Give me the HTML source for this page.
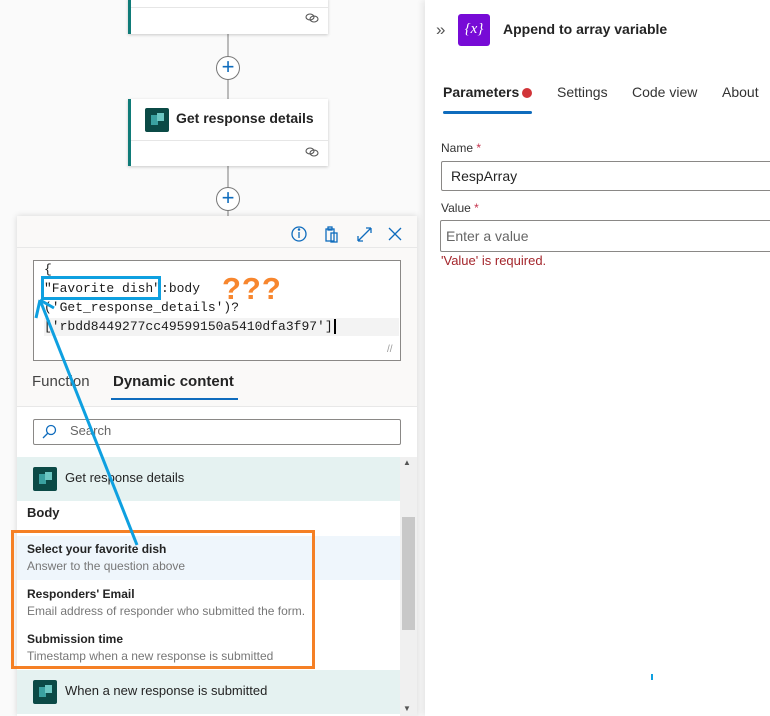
<!DOCTYPE html>
<html><head><meta charset="utf-8"><style>
*{margin:0;padding:0;box-sizing:border-box}
body{width:770px;height:716px;overflow:hidden;background:#fafafa;font-family:"Segoe UI","Liberation Sans",sans-serif;color:#242424;position:relative}
.a{position:absolute}
.card{position:absolute;background:#fff;border-left:3px solid #0f7b78;box-shadow:0 1px 3px rgba(0,0,0,.2)}
.mono{font-family:"Liberation Mono",monospace;font-size:13px;color:#1b1b1b}
.ficon{position:absolute;background:#0b4a46;border-radius:2px}
.ficon:before{content:"";position:absolute;left:25%;top:30%;width:30%;height:40%;background:#3aa1a0}
.ficon:after{content:"";position:absolute;left:48%;top:22%;width:32%;height:32%;background:#6cc7c2}
.t{position:absolute;white-space:nowrap}
</style></head><body>
<div class="a" style="left:227px;top:30px;width:2px;height:190px;background:#bbb"></div>
<div class="card" style="left:128px;top:-2px;width:200px;height:36px">
 <div class="a" style="left:0;top:9px;width:197px;height:1px;background:#e6e6e6"></div>
 <svg class="a" style="left:174px;top:15px" width="14" height="10" fill="none" stroke="#555" stroke-width="1.1"><ellipse cx="5" cy="4" rx="4" ry="3"/><ellipse cx="9" cy="6" rx="4" ry="3"/></svg>
</div>
<div class="a" style="left:216px;top:56px;width:24px;height:24px;border:1px solid #777;border-radius:50%;background:#fff;color:#0f6cbd;font-size:22px;line-height:20px;text-align:center">+</div>
<div class="card" style="left:128px;top:99px;width:200px;height:67px">
 <div class="ficon" style="left:14px;top:9px;width:24px;height:24px"></div>
 <div class="t" style="left:45px;top:11px;font-size:14px;font-weight:600">Get response details</div>
 <div class="a" style="left:0;top:41px;width:197px;height:1px;background:#e6e6e6"></div>
 <svg class="a" style="left:174px;top:48px" width="14" height="10" fill="none" stroke="#555" stroke-width="1.1"><ellipse cx="5" cy="4" rx="4" ry="3"/><ellipse cx="9" cy="6" rx="4" ry="3"/></svg>
</div>
<div class="a" style="left:216px;top:187px;width:24px;height:24px;border:1px solid #777;border-radius:50%;background:#fff;color:#0f6cbd;font-size:22px;line-height:20px;text-align:center">+</div>

<div class="a" style="left:17px;top:216px;width:400px;height:500px;background:#fff;box-shadow:0 0 6px rgba(0,0,0,.15)">
 <div class="a" style="left:0;top:0;width:400px;height:191px;background:#faf9f8"></div>
 <div class="a" style="left:0;top:31px;width:400px;height:1px;background:#e8e8e8"></div>
 <svg class="a" style="left:270px;top:8px" width="125" height="22" viewBox="0 0 125 22" fill="none" stroke="#0f6cbd" stroke-width="1.3">
  <circle cx="12" cy="10" r="7"/><line x1="12" y1="8" x2="12" y2="14"/><circle cx="12" cy="5.5" r=".6" fill="#0f6cbd"/>
  <rect x="39" y="5" width="8" height="12"/><rect x="44" y="9" width="6" height="9"/><rect x="41" y="3" width="4" height="3"/>
  <path d="M71 17 L84 4 M71 17 v-5 M71 17 h5 M84 4 h-5 M84 4 v5"/>
  <path d="M102 4 L114 16 M114 4 L102 16"/>
 </svg>
 <div class="a" style="left:16px;top:44px;width:368px;height:101px;background:#fff;border:1px solid #8a8886"></div>
 <div class="a" style="left:27px;top:102px;width:355px;height:18px;background:#f3f3f3"></div>
 <div class="t mono" style="left:27px;top:44px;line-height:19px">{<br>"Favorite dish":body<br>('Get_response_details')?<br>['rbdd8449277cc49599150a5410dfa3f97']<span style="border-left:2px solid #000;margin-left:1px"></span></div>
 <div class="a" style="left:24px;top:60px;width:120px;height:24px;border:3px solid #0ea0e0"></div>
 <div class="t" style="left:205px;top:55px;font-size:31px;color:#f7862e;letter-spacing:1px;font-weight:600">???</div>
 <div class="t" style="left:370px;top:128px;font-size:10px;color:#999">//</div>
 <div class="t" style="left:15px;top:157px;font-size:15px;color:#444">Function</div>
 <div class="t" style="left:96px;top:157px;font-size:15px;font-weight:600;color:#242424">Dynamic content</div>
 <div class="a" style="left:94px;top:182px;width:127px;height:2px;background:#0f6cbd"></div>
 <div class="a" style="left:0;top:190px;width:400px;height:1px;background:#e8e8e8"></div>
 <div class="a" style="left:16px;top:203px;width:368px;height:26px;border:1px solid #8a8886;border-radius:2px"></div>
 <svg class="a" style="left:24px;top:208px" width="16" height="16" fill="none" stroke="#0f6cbd" stroke-width="1.3"><circle cx="10" cy="6" r="4.5"/><path d="M7 9 L2 14"/></svg>
 <div class="t" style="left:53px;top:207px;font-size:13px;color:#666">Search</div>
 <div class="a" style="left:0;top:241px;width:383px;height:44px;background:#e5f2f1"></div>
 <div class="ficon" style="left:16px;top:251px;width:24px;height:24px"></div>
 <div class="t" style="left:48px;top:254px;font-size:13px">Get response details</div>
 <div class="t" style="left:10px;top:289px;font-size:13px;font-weight:600">Body</div>
 <div class="a" style="left:0;top:320px;width:383px;height:44px;background:#eff6fc"></div>
 <div class="t" style="left:10px;top:326px;font-size:12px;font-weight:600">Select your favorite dish</div>
 <div class="t" style="left:10px;top:343px;font-size:12px;color:#777">Answer to the question above</div>
 <div class="t" style="left:10px;top:371px;font-size:12px;font-weight:600">Responders' Email</div>
 <div class="t" style="left:10px;top:388px;font-size:12px;color:#777">Email address of responder who submitted the form.</div>
 <div class="t" style="left:10px;top:416px;font-size:12px;font-weight:600">Submission time</div>
 <div class="t" style="left:10px;top:433px;font-size:12px;color:#777">Timestamp when a new response is submitted</div>
 <div class="a" style="left:0;top:454px;width:383px;height:44px;background:#e5f2f1"></div>
 <div class="ficon" style="left:16px;top:464px;width:24px;height:24px"></div>
 <div class="t" style="left:48px;top:467px;font-size:13px">When a new response is submitted</div>
 <div class="a" style="left:383px;top:241px;width:17px;height:259px;background:#f0f0f0"></div>
 <div class="a" style="left:385px;top:301px;width:13px;height:113px;background:#c8c8c8"></div>
 <div class="t" style="left:386px;top:242px;font-size:8px;color:#555">▲</div>
 <div class="t" style="left:386px;top:488px;font-size:8px;color:#555">▼</div>
</div>
<div class="a" style="left:11px;top:530px;width:304px;height:139px;border:3px solid #f58025"></div>
<svg class="a" style="left:0;top:0" width="420" height="716"><g stroke="#0ea0e0" stroke-width="3" fill="none"><path d="M137 545 L40 300"/><path d="M40 300 L36 318 M40 300 L54 308"/></g></svg>

<div class="a" style="left:425px;top:0;width:345px;height:716px;background:#fff;box-shadow:-3px 0 6px rgba(0,0,0,.08)">
 <div class="t" style="left:11px;top:20px;font-size:17px;color:#555">»</div>
 <div class="a" style="left:33px;top:14px;width:32px;height:32px;background:#770bd6;border-radius:3px;color:#fff;font-size:15px;line-height:31px;text-align:center;font-family:'Liberation Serif',serif;font-style:italic">{x}</div>
 <div class="t" style="left:78px;top:21px;font-size:14px;font-weight:600">Append to array variable</div>
 <div class="t" style="left:18px;top:84px;font-size:14px;font-weight:600">Parameters</div>
 <div class="a" style="left:97px;top:88px;width:10px;height:10px;border-radius:50%;background:#d13438"></div>
 <div class="t" style="left:132px;top:84px;font-size:14px;color:#333">Settings</div>
 <div class="t" style="left:207px;top:84px;font-size:14px;color:#333">Code view</div>
 <div class="t" style="left:297px;top:84px;font-size:14px;color:#333">About</div>
 <div class="a" style="left:18px;top:111px;width:89px;height:3px;background:#0f6cbd;border-radius:2px"></div>
 <div class="t" style="left:16px;top:141px;font-size:12px;color:#333">Name <span style="color:#c4314b">*</span></div>
 <div class="a" style="left:16px;top:161px;width:340px;height:30px;border:1px solid #8a8886;border-radius:2px"></div>
 <div class="t" style="left:26px;top:168px;font-size:14px">RespArray</div>
 <div class="t" style="left:16px;top:201px;font-size:12px;color:#333">Value <span style="color:#c4314b">*</span></div>
 <div class="a" style="left:15px;top:220px;width:340px;height:32px;border:1px solid #8a8886;border-radius:2px"></div>
 <div class="t" style="left:21px;top:228px;font-size:14px;color:#666">Enter a value</div>
 <div class="t" style="left:16px;top:253px;font-size:13px;color:#a4262c">'Value' is required.</div>
 <div class="a" style="left:226px;top:674px;width:2px;height:6px;background:#0ea0e0"></div>
</div>
</body></html>
